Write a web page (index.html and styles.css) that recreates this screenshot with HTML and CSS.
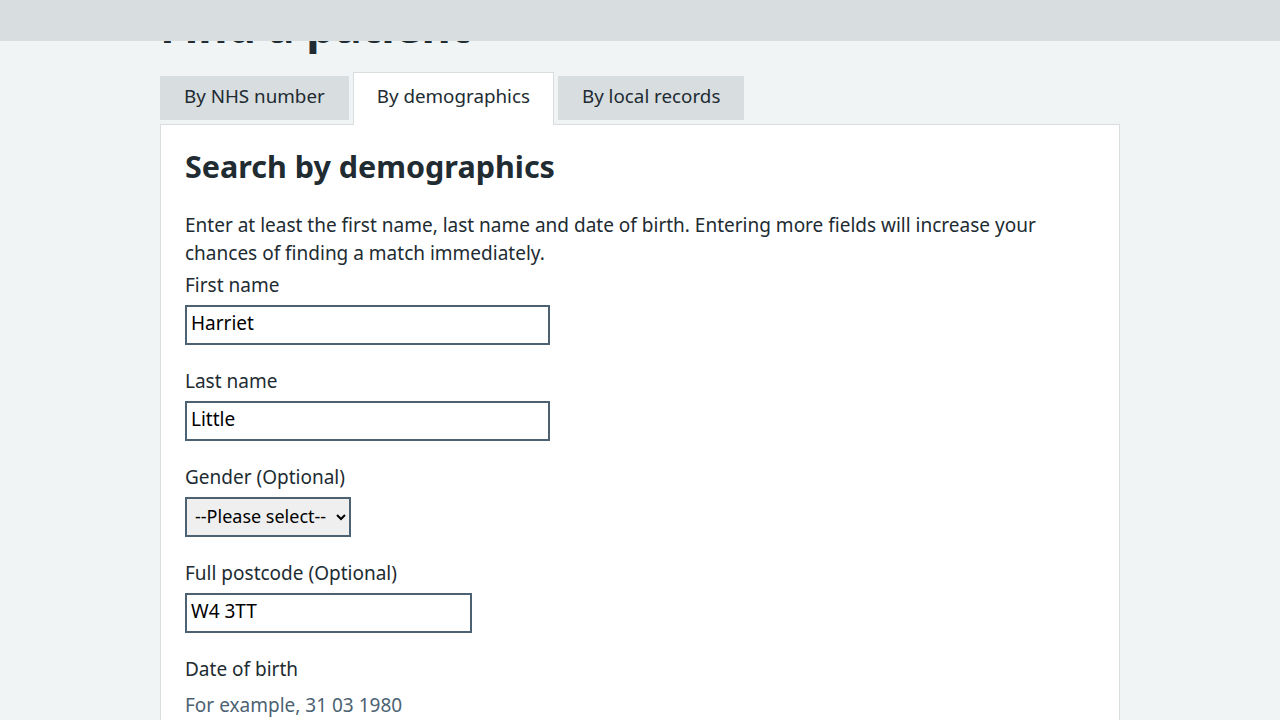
FILE: index.html
```html
<!DOCTYPE html>
<html lang="en">
<head>
<meta charset="utf-8">
<title>Find a patient</title>
<link rel="stylesheet" href="styles.css">
</head>
<body>
<header class="topbar"></header>
<main class="container">
  <h1 class="page-title">Find a patient</h1>
  <ul class="tabs">
    <li class="tab">By NHS number</li>
    <li class="tab tab-selected">By demographics</li>
    <li class="tab">By local records</li>
  </ul>
  <section class="panel">
    <h2 class="panel-title">Search by demographics</h2>
    <p class="intro">Enter at least the first name, last name and date of birth. Entering more fields will increase your chances of finding a match immediately.</p>
    <div class="form-group">
      <label class="label" for="first">First name</label>
      <input class="input input-wide" id="first" type="text" value="Harriet">
    </div>
    <div class="form-group">
      <label class="label" for="last">Last name</label>
      <input class="input input-wide" id="last" type="text" value="Little">
    </div>
    <div class="form-group">
      <label class="label" for="gender">Gender (Optional)</label>
      <select class="select" id="gender">
        <option>--Please select--</option>
        <option>Female</option>
        <option>Male</option>
      </select>
    </div>
    <div class="form-group">
      <label class="label" for="postcode">Full postcode (Optional)</label>
      <input class="input input-short" id="postcode" type="text" value="W4 3TT">
    </div>
    <div class="form-group">
      <span class="label label-dob">Date of birth</span>
      <span class="hint">For example, 31 03 1980</span>
    </div>
  </section>
</main>
</body>
</html>
```
FILE: styles.css
```css
html, body {
  margin: 0;
  padding: 0;
  background: #f0f4f5;
  color: #212b32;
  font-family: "Noto Sans", "Open Sans", sans-serif;
  font-size: 19px;
  line-height: 28px;
}

.topbar {
  position: fixed;
  top: 0;
  left: 0;
  right: 0;
  height: 41px;
  background: #d8dde0;
  z-index: 10;
}

.container {
  width: 960px;
  margin: 0 auto;
}

.page-title {
  margin: -1px 0 23px;
  font-size: 45px;
  line-height: 54px;
  font-weight: 700;
  color: #212b32;
}

.tabs {
  list-style: none;
  margin: 0;
  padding: 0;
  display: flex;
  align-items: flex-start;
  gap: 4px;
}

.tab {
  background: #d8dde0;
  padding: 6px 24px 10px;
  color: #212b32;
  font-size: 18.8px;
  white-space: nowrap;
}

.tab-selected {
  position: relative;
  z-index: 1;
  margin-top: -4px;
  background: #fff;
  border: 1px solid #d8dde0;
  border-bottom: 0;
  padding: 9px 23px 15px;
}

.panel {
  margin-top: -1px;
  background: #fff;
  border: 1px solid #d8dde0;
  padding: 21px 24px 40px;
  min-height: 700px;
}

.panel-title {
  margin: 0 0 25px;
  font-size: 30.5px;
  line-height: 40px;
  font-weight: 700;
}

.intro {
  margin: 0 0 4px;
}

.form-group {
  margin-bottom: 22px;
}

.label {
  display: block;
  margin-bottom: 6px;
}

.label-dob {
  margin-bottom: 8px;
}

.hint {
  display: block;
  color: #4c6272;
}

.input {
  display: block;
  box-sizing: border-box;
  height: 40px;
  margin: 0;
  padding: 4px 4px 8px;
  border: 2px solid #4c6272;
  border-radius: 0;
  background: #fff;
  color: #000;
  font-family: inherit;
  font-size: 19px;
  line-height: 24px;
}

.input-wide {
  width: 365px;
}

.input-short {
  width: 287px;
}

.select {
  display: block;
  box-sizing: border-box;
  width: 166px;
  height: 40px;
  margin: 0;
  padding: 0 4px 3px;
  border: 2px solid #4c6272;
  border-radius: 0;
  background-color: #efefef;
  color: #000;
  font-family: inherit;
  font-size: 18px;
}
```
